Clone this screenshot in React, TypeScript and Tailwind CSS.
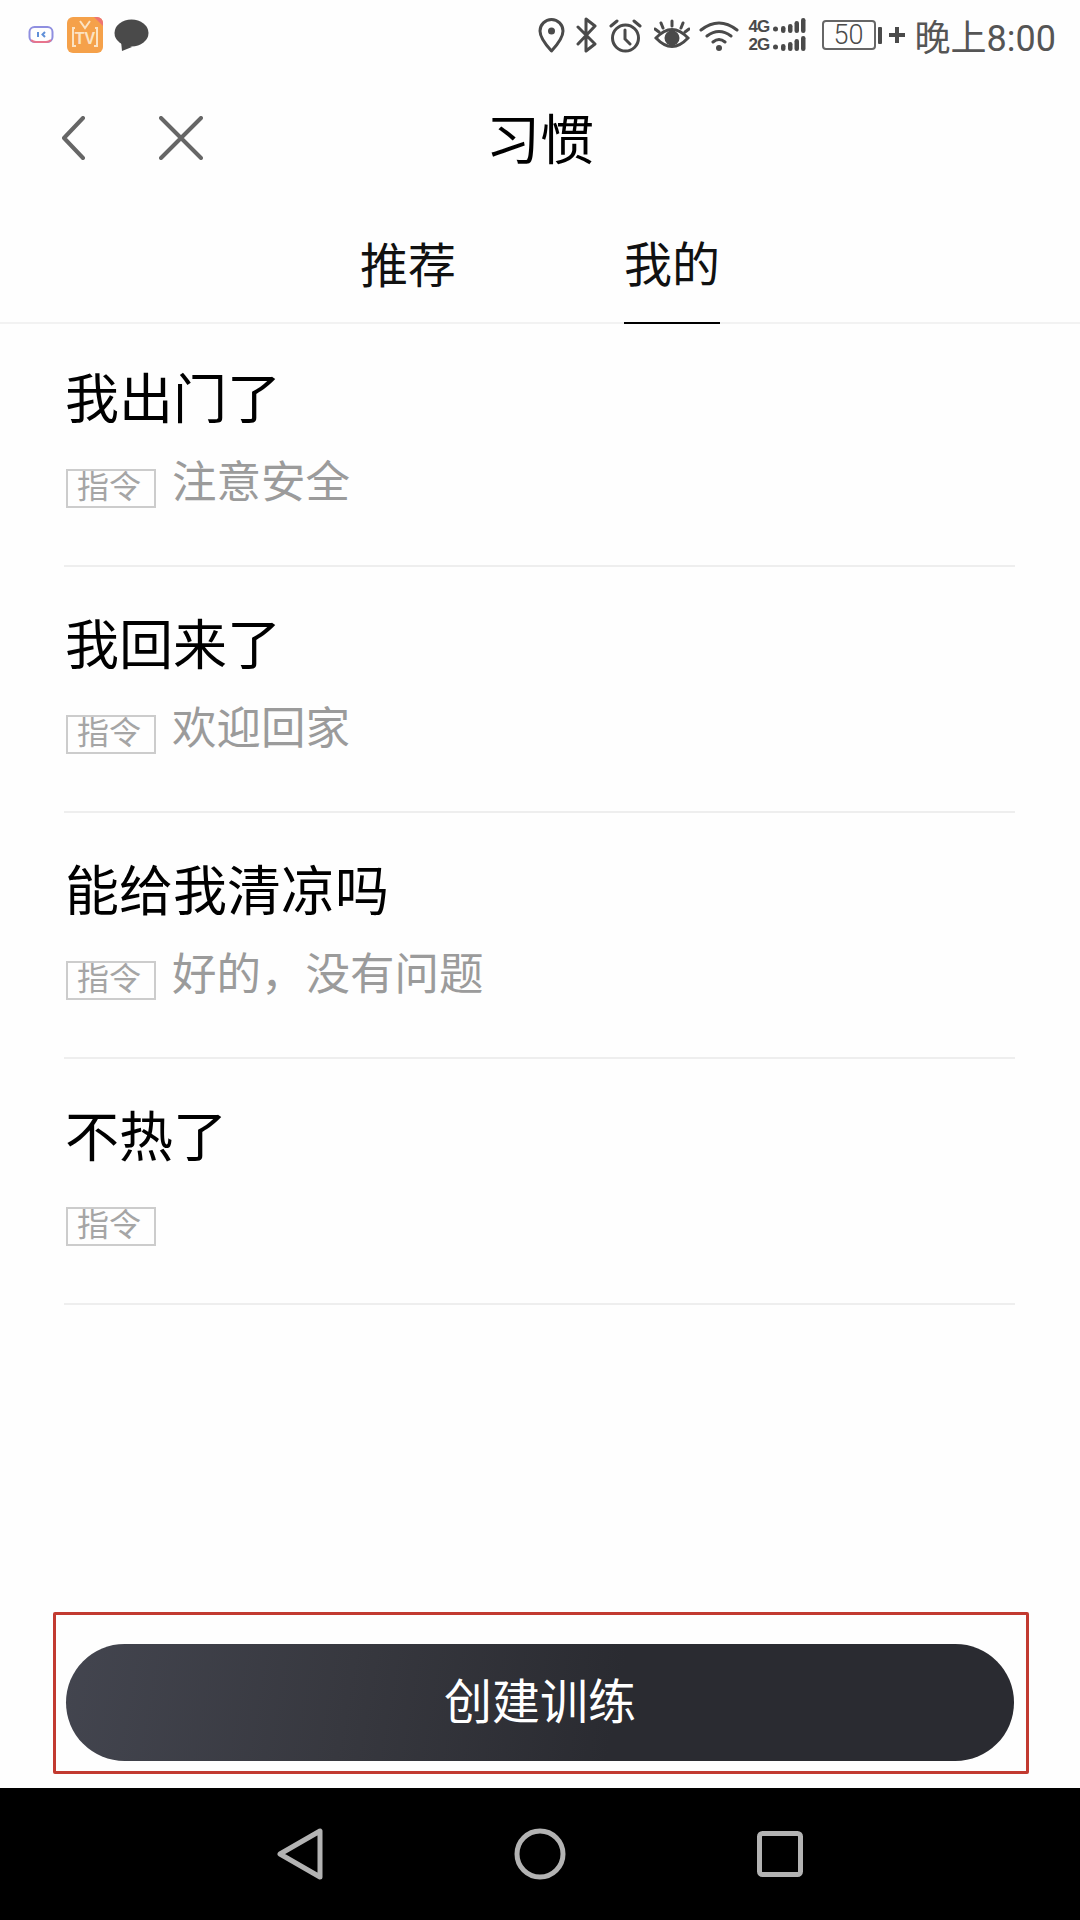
const items = [
  { title: "我出门了", reply: "注意安全" },
  { title: "我回来了", reply: "欢迎回家" },
  { title: "能给我清凉吗", reply: "好的，没有问题" },
  { title: "不热了", reply: "" },
]

function SignalBars() {
  return (
    <svg width="33" height="16" viewBox="0 0 33 16" fill="#4a4a4a">
      <circle cx="2.500" cy="11" r="2.500" />
      <rect x="8" y="8" width="4.500" height="7" rx="2.200" />
      <rect x="15" y="6" width="4.500" height="9" rx="2.200" />
      <rect x="21.500" y="3" width="4.500" height="12" rx="2.200" />
      <rect x="28" y="0" width="4.500" height="15" rx="2.200" />
    </svg>
  )
}

function StatusBar() {
  return (
    <div className="h-[70px] flex items-center justify-between pl-[28px] pr-[24px] text-[#4a4a4a]">
      <div className="flex items-center">
        <svg width="26" height="20" viewBox="0 0 26 20" fill="none">
          <rect x="1.500" y="2" width="23" height="15" rx="5" stroke="#8f8fe0" strokeWidth="2" />
          <path d="M3 15q2 2 5 2h10q3 0 5-2" stroke="#e8748c" strokeWidth="2" />
          <rect x="9" y="7" width="2" height="5" fill="#5f8fd8" />
          <path d="M17 7l-2.500 2.500L17 12" stroke="#5f8fd8" strokeWidth="2" />
        </svg>
        <div className="relative ml-[13px] w-[36px] h-[36px] rounded-[6px] bg-[#f5a14a] overflow-hidden flex items-center justify-center">
          <span className="text-[16px] leading-none font-bold text-[#fbe3c3] mt-[8px] font-['Liberation_Sans',sans-serif]">TV</span>
          <svg className="absolute inset-0" width="36" height="36" viewBox="0 0 36 36" fill="none" stroke="#fbe3c3" strokeWidth="2">
            <path d="M8 11h-2v18h3M28 11h2v18h-3M13 4l5 7 5-7" />
            <path d="M27 0l9 9V0z" fill="#ee7474" stroke="none" />
          </svg>
        </div>
        <svg className="ml-[11px]" width="35" height="33" viewBox="0 0 35 33" fill="#4a4a4a">
          <ellipse cx="17.500" cy="14" rx="17" ry="13.500" />
          <path d="M7 22l1 10 10-4z" />
        </svg>
      </div>

      <div className="flex items-center">
        <svg width="27" height="35" viewBox="0 0 27 35" fill="none" stroke="#4a4a4a" strokeWidth="3">
          <path d="M13.500 33C7 26 2 19 2 13a11.500 11.500 0 0 1 23 0C25 19 20 26 13.500 33z" strokeLinejoin="round" />
          <circle cx="13.500" cy="13" r="3.500" fill="#4a4a4a" stroke="none" />
        </svg>
        <svg className="ml-[11px]" width="21" height="36" viewBox="0 0 21 36" fill="none" stroke="#4a4a4a" strokeWidth="3" strokeLinecap="round" strokeLinejoin="round">
          <path d="M2 10l17 17-9 7V2l9 7-17 18" />
        </svg>
        <svg className="ml-[12px]" width="33" height="35" viewBox="0 0 33 35" fill="none" stroke="#4a4a4a" strokeWidth="3" strokeLinecap="round">
          <circle cx="16.500" cy="20" r="13" />
          <path d="M16 12v9l5 5M2 8l6-5M31 8l-6-5" />
        </svg>
        <svg className="ml-[12px]" width="36" height="32" viewBox="0 0 36 32" fill="none" stroke="#4a4a4a" strokeWidth="3" strokeLinecap="round">
          <path d="M2 19Q18 2 34 19Q18 36 2 19z" />
          <circle cx="18" cy="19" r="7.500" fill="#4a4a4a" stroke="none" />
          <path d="M18 2v5M7 4l2 5M29 4l-2 5M1 10l4 3M35 10l-4 3" />
        </svg>
        <svg className="ml-[9px]" width="40" height="33" viewBox="0 0 40 33" fill="none" stroke="#4a4a4a" strokeWidth="3" strokeLinecap="round">
          <path d="M2 11Q20-3 38 11M8 17Q20 8 32 17M14 23Q20 18 26 23" />
          <circle cx="20" cy="29" r="3" fill="#4a4a4a" stroke="none" />
        </svg>
        <div className="ml-[10px] w-[57px] flex flex-col gap-[2px]">
          <div className="flex items-center justify-between h-[16px]">
            <span className="text-[17px] leading-none font-bold tracking-[-1px] font-['Liberation_Sans',sans-serif]">4G</span>
            <SignalBars />
          </div>
          <div className="flex items-center justify-between h-[16px]">
            <span className="text-[17px] leading-none font-bold tracking-[-1px] font-['Liberation_Sans',sans-serif]">2G</span>
            <SignalBars />
          </div>
        </div>
        <div className="ml-[16px] w-[54px] h-[30px] border-2 border-[#666] rounded-[4px] flex items-center justify-center text-[27px] leading-none font-['Roboto',sans-serif] font-light">
          50
        </div>
        <div className="ml-[2px] w-[4px] h-[17px] bg-[#4a4a4a] rounded-[1px]" />
        <svg className="ml-[7px]" width="16" height="16" viewBox="0 0 16 16" fill="#4a4a4a">
          <rect x="0" y="6" width="16" height="4" />
          <rect x="6" y="0" width="4" height="16" />
        </svg>
        <span className="ml-[10px] mt-[7px] text-[36px] leading-none font-['Roboto','Noto_Sans_CJK_SC',sans-serif] text-[#555]">晚上8:00</span>
      </div>
    </div>
  )
}

function Row({ title, reply }: { title: string; reply: string }) {
  return (
    <div className="h-[246px] first:h-[243px] first:pt-[40px] pt-[43px] pl-[2px] border-b-2 border-[#eeeeee]">
      <div className="-ml-[1px] text-[54px] leading-[64px] text-black">{title}</div>
      <div className="flex items-start h-[60px] mt-[22px]">
        <div className="mt-[19px] w-[90px] h-[39px] border-2 border-[#cccccc] flex items-center justify-center pb-[9px] pr-[4px] text-[32px] leading-none text-[#a5a5a5]">
          指令
        </div>
        <div className="ml-[16px] -mt-[1px] text-[44.500px] leading-[60px] text-[#9b9b9b]">{reply}</div>
      </div>
    </div>
  )
}

export default function App() {
  return (
    <div className="w-[1080px] h-[1920px] flex flex-col bg-[#fefefe] font-['Noto_Sans_CJK_SC',sans-serif]">
      <StatusBar />

      <div className="h-[140px] grid grid-cols-3 items-center">
        <div className="flex items-center pl-[62px] pb-[5px]">
          <svg width="24" height="44" viewBox="0 0 24 44" fill="none" stroke="#666666" strokeWidth="4" strokeLinecap="round" strokeLinejoin="round">
            <path d="M21 2L2 22l19 20" />
          </svg>
          <svg className="ml-[73px]" width="44" height="44" viewBox="0 0 44 44" fill="none" stroke="#666666" strokeWidth="4" strokeLinecap="round">
            <path d="M2 2l40 40M42 2L2 42" />
          </svg>
        </div>
        <div className="text-center text-[54px] leading-none pb-[7px] text-black">习惯</div>
      </div>

      <div className="h-[114px] flex justify-center gap-[168px] border-b-2 border-[#f2f2f2] text-[48px] text-[#111]">
        <div className="w-[96px] h-[114px] flex items-center justify-center pb-[10px]">推荐</div>
        <div className="w-[96px] h-[114px] flex items-center justify-center pb-[10px] border-b-2 border-black">我的</div>
      </div>

      <div className="flex-1 mx-[64px] w-[951px]">
        {items.map((item) => (
          <Row key={item.title} title={item.title} reply={item.reply} />
        ))}
      </div>

      <div className="ml-[53px] w-[976px] mb-[14px] pt-[29px] pb-[10px] pl-[10px] pr-[11px] border-[3px] border-[#c23a30] rounded-[2px]">
        <button className="w-[948px] h-[117px] pb-[10px] rounded-full bg-[linear-gradient(100deg,#43454f_0%,#37383f_30%,#2a2b31_58%,#2a2b31_100%)] text-white text-[48px] leading-none">
          创建训练
        </button>
      </div>

      <div className="h-[132px] bg-black flex items-center">
        <svg className="ml-[276px]" width="48" height="52" viewBox="0 0 48 52" fill="none" stroke="#b3b3b3" strokeWidth="5" strokeLinejoin="round">
          <path d="M4 26L44 3v46z" />
        </svg>
        <svg className="ml-[190px]" width="52" height="52" viewBox="0 0 52 52" fill="none" stroke="#b3b3b3" strokeWidth="5">
          <circle cx="26" cy="26" r="23" />
        </svg>
        <svg className="ml-[191px]" width="46" height="46" viewBox="0 0 46 46" fill="none" stroke="#b3b3b3" strokeWidth="5">
          <rect x="2.500" y="2.500" width="41" height="41" rx="3" />
        </svg>
      </div>
    </div>
  )
}
